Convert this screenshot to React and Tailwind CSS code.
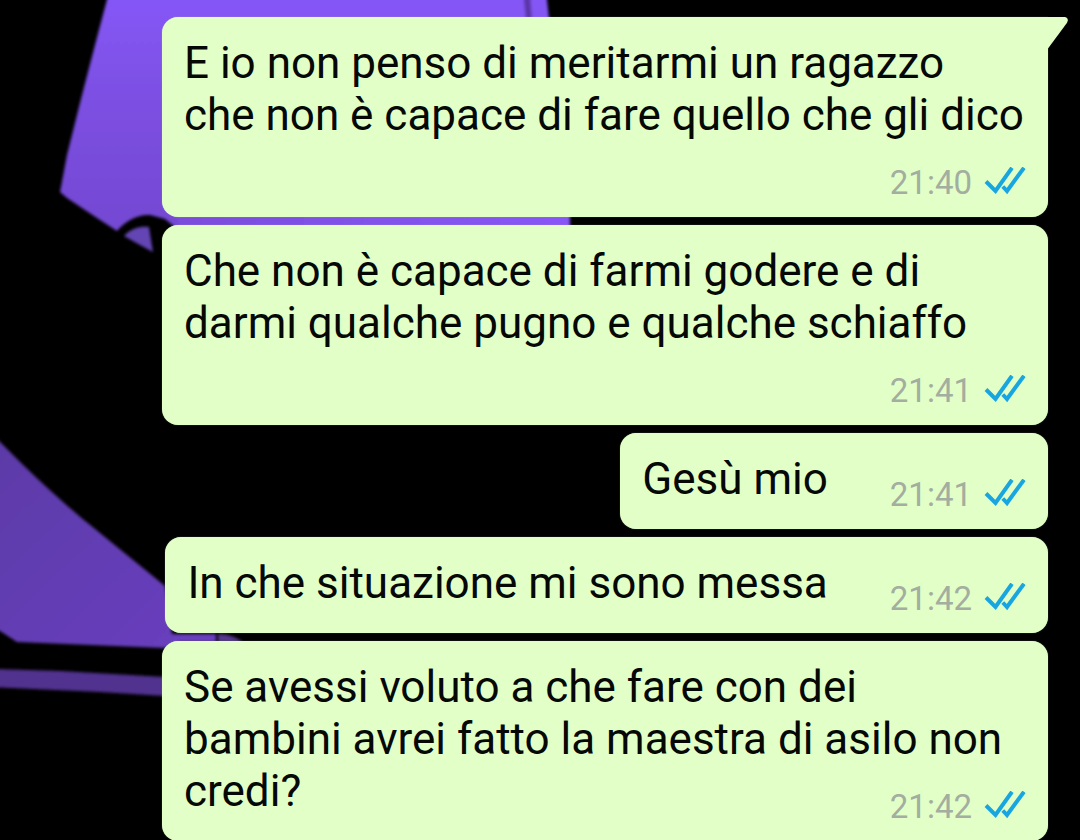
// ─── Data ────────────────────────────────────────────────────────────────────

const messages = [
  {
    id: 1,
    text: "E io non penso di meritarmi un ragazzo\nche non è capace di fare quello che gli dico",
    time: "21:40",
    tail: true,
  },
  {
    id: 2,
    text: "Che non è capace di farmi godere e di darmi qualche pugno e qualche schiaffo",
    time: "21:41",
  },
  { id: 3, text: "Gesù mio", time: "21:41" },
  { id: 4, text: "In che situazione mi sono messa", time: "21:42" },
  {
    id: 5,
    text: "Se avessi voluto a che fare con dei\nbambini avrei fatto la maestra di asilo non credi?",
    time: "21:42",
  },
];

// ─── Icons and drawings ──────────────────────────────────────────────────────

function DoubleCheck() {
  return (
    <svg
      width="42"
      height="30"
      viewBox="0 0 42 30"
      fill="none"
      stroke="#19a6e0"
      strokeWidth="4"
      role="img"
      aria-label="Letto"
    >
      <path d="M2 14.5L11.5 24L28 0.8" />
      <path d="M18.8 19.5L23 24L40 0.8" />
    </svg>
  );
}

function Tail() {
  return (
    <svg
      className="absolute top-0 left-full -ml-px"
      width="22"
      height="32"
      viewBox="0 0 22 32"
      fill="#e1ffc7"
      aria-hidden="true"
    >
      <path d="M0 0H18Q21 0.5 20.8 3.5Q20.6 5 19.5 6.5L1 31.5H0Z" />
    </svg>
  );
}

function Wallpaper() {
  return (
    <svg
      className="absolute top-0 left-0"
      width="1080"
      height="840"
      viewBox="0 0 1080 840"
      aria-hidden="true"
    >
      <defs>
        <linearGradient id="cloth" x1="0" y1="0" x2="0" y2="1">
          <stop offset="0" stopColor="#8657f8" />
          <stop offset="0.4" stopColor="#7d50e4" />
          <stop offset="1" stopColor="#7448d2" />
        </linearGradient>
        <linearGradient id="fold" x1="0" y1="0" x2="1" y2="1">
          <stop offset="0" stopColor="#5b3aa6" />
          <stop offset="1" stopColor="#6a3fc0" />
        </linearGradient>
        <linearGradient id="strip" x1="0" y1="0" x2="1" y2="0">
          <stop offset="0" stopColor="#7a4ddc" />
          <stop offset="1" stopColor="#8757f5" />
        </linearGradient>
        <filter id="soft" x="-5%" y="-5%" width="110%" height="110%">
          <feGaussianBlur stdDeviation="1.5" />
        </filter>
      </defs>
      <g filter="url(#soft)">
        <path
          d="M109 -8L95 45L82 95L67 155L60 192L67 198L97 218L117 231C124 222 138 214 150 215L165 219L176 228H570V200L546 -8Z"
          fill="url(#cloth)"
        />
        <path d="M176 212H570V230H180Z" fill="url(#strip)" />
        <path d="M523 -8L526 20H532L530 -8Z" fill="#5b36a8" />
        <path d="M124 236C132 227 142 226 149 227L151 240L153 252L140 245Z" fill="#6444b4" />
        <path
          d="M-8 433L0 442C28 470 62 503 100 533L165 586L172 634L216 634V642H180L165 648L17 642L0 631L-8 628Z"
          fill="url(#fold)"
        />
        <path d="M218 634C228 634 236 637 243 642H218Z" fill="#57398f" />
        <path d="M-8 669L60 671L165 677V696L100 692L-8 687Z" fill="#51328f" />
      </g>
    </svg>
  );
}

// ─── Message bubble ──────────────────────────────────────────────────────────

function Bubble({ text, time, tail }) {
  return (
    <li
      className={`relative flow-root bg-[#e1ffc7] px-[22px] pt-5 pb-1 shadow-[0_0_1px_rgba(225,255,199,0.6)] ${
        tail ? "rounded-2xl rounded-tr-none" : "rounded-2xl"
      }`}
    >
      {tail && <Tail />}
      <span className="whitespace-pre-line text-[44px] leading-[52px] text-[#050805]">{text}</span>
      {/* the stamp floats next to the last line, or drops below it when there is no room */}
      <span className="float-right ml-[62px] flex h-[72px] items-end gap-3 pb-4">
        <time className="text-[33px] leading-7 text-[#a3ada0]">{time}</time>
        <DoubleCheck />
      </span>
    </li>
  );
}

// ─── Page ────────────────────────────────────────────────────────────────────

function App() {
  return (
    <main className="relative h-screen overflow-hidden bg-black font-['Roboto',sans-serif]">
      <Wallpaper />
      <ul className="relative flex flex-col items-end gap-2 pt-[17px] pr-8 pl-[162px]">
        {messages.map((m) => (
          <Bubble key={m.id} text={m.text} time={m.time} tail={m.tail} />
        ))}
      </ul>
    </main>
  );
}

export default App;
